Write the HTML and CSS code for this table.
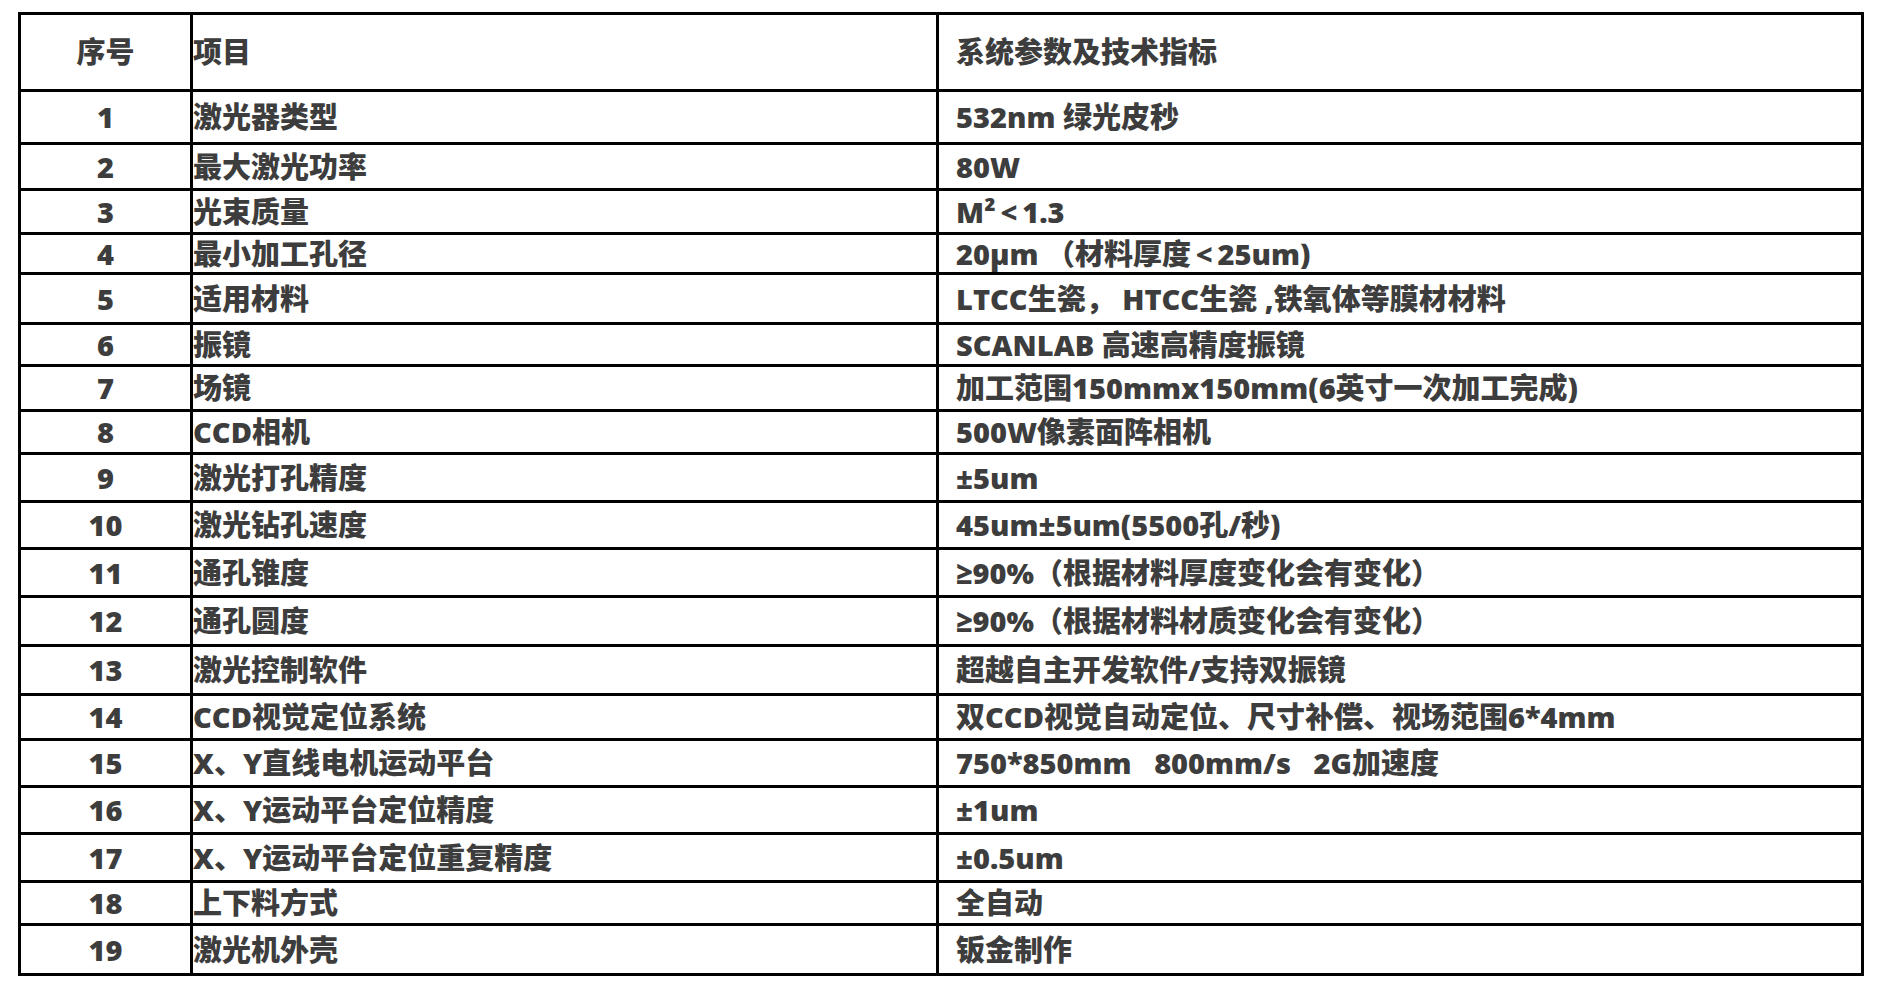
FILE: index.html
```html
<!DOCTYPE html>
<html lang="zh-CN">
<head>
<meta charset="utf-8">
<title>系统参数及技术指标</title>
<link rel="stylesheet" href="styles.css">
</head>
<body>
<div class="spec">
  <div class="row head"><div class="c1">序号</div><div class="c2">项目</div><div class="c3">系统参数及技术指标</div></div>
  <div class="row"><div class="c1">1</div><div class="c2">激光器类型</div><div class="c3">532nm 绿光皮秒</div></div>
  <div class="row"><div class="c1">2</div><div class="c2">最大激光功率</div><div class="c3">80W</div></div>
  <div class="row"><div class="c1">3</div><div class="c2">光束质量</div><div class="c3">M²&thinsp;&lt;&thinsp;1.3</div></div>
  <div class="row"><div class="c1">4</div><div class="c2">最小加工孔径</div><div class="c3">20μm （材料厚度&thinsp;&lt;&thinsp;25um)</div></div>
  <div class="row"><div class="c1">5</div><div class="c2">适用材料</div><div class="c3">LTCC生瓷， HTCC生瓷 ,铁氧体等膜材材料</div></div>
  <div class="row"><div class="c1">6</div><div class="c2">振镜</div><div class="c3">SCANLAB 高速高精度振镜</div></div>
  <div class="row"><div class="c1">7</div><div class="c2">场镜</div><div class="c3">加工范围150mmx150mm(6英寸一次加工完成)</div></div>
  <div class="row"><div class="c1">8</div><div class="c2">CCD相机</div><div class="c3">500W像素面阵相机</div></div>
  <div class="row"><div class="c1">9</div><div class="c2">激光打孔精度</div><div class="c3">±5um</div></div>
  <div class="row"><div class="c1">10</div><div class="c2">激光钻孔速度</div><div class="c3">45um±5um(5500孔/秒)</div></div>
  <div class="row"><div class="c1">11</div><div class="c2">通孔锥度</div><div class="c3">≥90%（根据材料厚度变化会有变化）</div></div>
  <div class="row"><div class="c1">12</div><div class="c2">通孔圆度</div><div class="c3">≥90%（根据材料材质变化会有变化）</div></div>
  <div class="row"><div class="c1">13</div><div class="c2">激光控制软件</div><div class="c3">超越自主开发软件/支持双振镜</div></div>
  <div class="row"><div class="c1">14</div><div class="c2">CCD视觉定位系统</div><div class="c3">双CCD视觉自动定位、尺寸补偿、视场范围6*4mm</div></div>
  <div class="row"><div class="c1">15</div><div class="c2">X、Y直线电机运动平台</div><div class="c3">750*850mm&nbsp;&nbsp; 800mm/s&nbsp;&nbsp; 2G加速度</div></div>
  <div class="row"><div class="c1">16</div><div class="c2">X、Y运动平台定位精度</div><div class="c3">±1um</div></div>
  <div class="row"><div class="c1">17</div><div class="c2">X、Y运动平台定位重复精度</div><div class="c3">±0.5um</div></div>
  <div class="row"><div class="c1">18</div><div class="c2">上下料方式</div><div class="c3">全自动</div></div>
  <div class="row"><div class="c1">19</div><div class="c2">激光机外壳</div><div class="c3">钣金制作</div></div>
</div>
</body>
</html>
```

FILE: styles.css
```css
html, body {
  margin: 0;
  padding: 0;
  background: #ffffff;
}

body {
  font-family: "Open Sans", "Noto Sans CJK SC", sans-serif;
  font-weight: 800;
  font-size: 29px;
  line-height: 1.1;
  color: #3d3d3d;
}

.spec {
  margin: 12px 0 0 18px;
  width: 1843px;
  border-top: 3px solid #000;
  border-left: 3px solid #000;
  display: flex;
  flex-direction: column;
}

.row {
  display: grid;
  grid-template-columns: 172px 746px 925px;
  height: 47px;
}

.row > div {
  display: flex;
  align-items: center;
  border-right: 3px solid #000;
  border-bottom: 3px solid #000;
  white-space: nowrap;
  min-width: 0;
}

.c1 { justify-content: center; }
.c2 { padding-left: 0; }
.c3 { padding-left: 17px; }

.row:nth-child(1)  { height: 77px; }
.row:nth-child(2)  { height: 53px; }
.row:nth-child(3)  { height: 46px; }
.row:nth-child(4)  { height: 44px; }
.row:nth-child(5)  { height: 40px; }
.row:nth-child(6)  { height: 50px; }
.row:nth-child(7)  { height: 42px; }
.row:nth-child(8)  { height: 45px; }
.row:nth-child(9)  { height: 43px; }
.row:nth-child(10) { height: 48px; }
.row:nth-child(11) { height: 47px; }
.row:nth-child(12) { height: 48px; }
.row:nth-child(13) { height: 49px; }
.row:nth-child(14) { height: 49px; }
.row:nth-child(15) { height: 45px; }
.row:nth-child(16) { height: 47px; }
.row:nth-child(17) { height: 47px; }
.row:nth-child(18) { height: 48px; }
.row:nth-child(19) { height: 43px; }
.row:nth-child(20) { height: 50px; }
```
